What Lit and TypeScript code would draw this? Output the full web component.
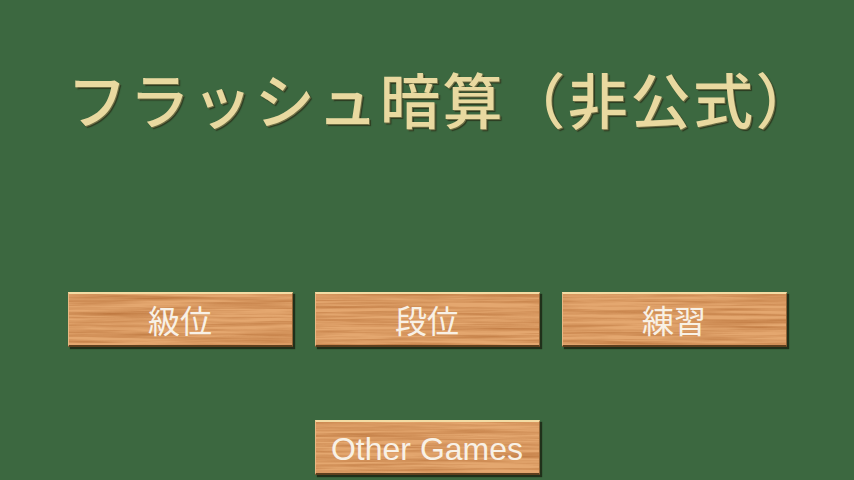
import { LitElement, html, css } from "lit";
import { customElement } from "lit/decorators.js";

@customElement("wood-button")
class WoodButton extends LitElement {
  static styles = css`
    :host { display: block; width: 225px; height: 55px; }
    .plank {
      position: relative; box-sizing: border-box; width: 100%; height: 100%;
      display: flex; align-items: center; justify-content: center;
      overflow: hidden;
      background: #dd9f66;
      border-top: 2px solid #f3dca4;
      border-left: 1px solid #e9b883;
      border-right: 1px solid #8f6236;
      border-bottom: 2px solid #5d3f1e;
      box-shadow: 2px 2px 1px #20301a;
    }
    svg { position: absolute; inset: 0; width: 100%; height: 100%; }
    span {
      position: relative; color: #f8f1e6; font-size: 32px; line-height: 1;
      font-family: "Noto Sans CJK JP", "Liberation Sans", sans-serif;
      font-weight: 400; padding-bottom: 2px;
    }
    span.latin {
      font-family: "Liberation Sans", Arial, sans-serif; font-size: 32px;
      padding: 2px 0 0;
    }
  `;
  static properties = { label: {}, seed: {}, latin: { type: Boolean } };
  label = ""; seed = "3"; latin = false;
  render() {
    const id = `grain${this.seed}`;
    return html`<div class="plank">
      <svg viewBox="0 0 225 55" preserveAspectRatio="none" aria-hidden="true">
        <filter id=${id} x="0" y="0" width="100%" height="100%" color-interpolation-filters="sRGB">
          <feTurbulence type="fractalNoise" baseFrequency="0.008 0.3" numOctaves="4" seed=${this.seed} />
          <feColorMatrix type="matrix" values="0 0 0 0 0.72  0 0 0 0 0.44  0 0 0 0 0.22  1.5 0 0 0 -0.5" />
        </filter>
        <rect width="225" height="55" fill="#e4a76f" />
        <rect width="225" height="55" filter="url(#${id})" />
      </svg>
      <span class=${this.latin ? "latin" : ""}>${this.label}</span>
    </div>`;
  }
}

@customElement("app-root")
class AppRoot extends LitElement {
  static styles = css`
    :host {
      display: flex; flex-direction: column; width: 854px; height: 480px;
      overflow: hidden; box-sizing: border-box; background: #3c6840; align-items: center;
    }
    h1 {
      margin: 0; height: 292px; box-sizing: border-box; padding: 62px 0 0 67px;
      align-self: flex-start;
      font: 500 60px/72px "Noto Sans CJK JP", sans-serif;
      color: #e9d9a0; white-space: nowrap; letter-spacing: 2.6px;
      text-shadow: 1px 1px 0 #6f6f45, 2px 2px 1px #2c3a20;
    }
    .row { display: flex; gap: 22px; }
    .bottom { margin-top: 73px; }
  `;
  render() {
    return html`
      <h1>フラッシュ暗算（非公式）</h1>
      <div class="row">
        <wood-button label="級位" seed="3"></wood-button>
        <wood-button label="段位" seed="8"></wood-button>
        <wood-button label="練習" seed="14"></wood-button>
      </div>
      <div class="row bottom">
        <wood-button label="Other Games" seed="21" latin></wood-button>
      </div>
    `;
  }
}
